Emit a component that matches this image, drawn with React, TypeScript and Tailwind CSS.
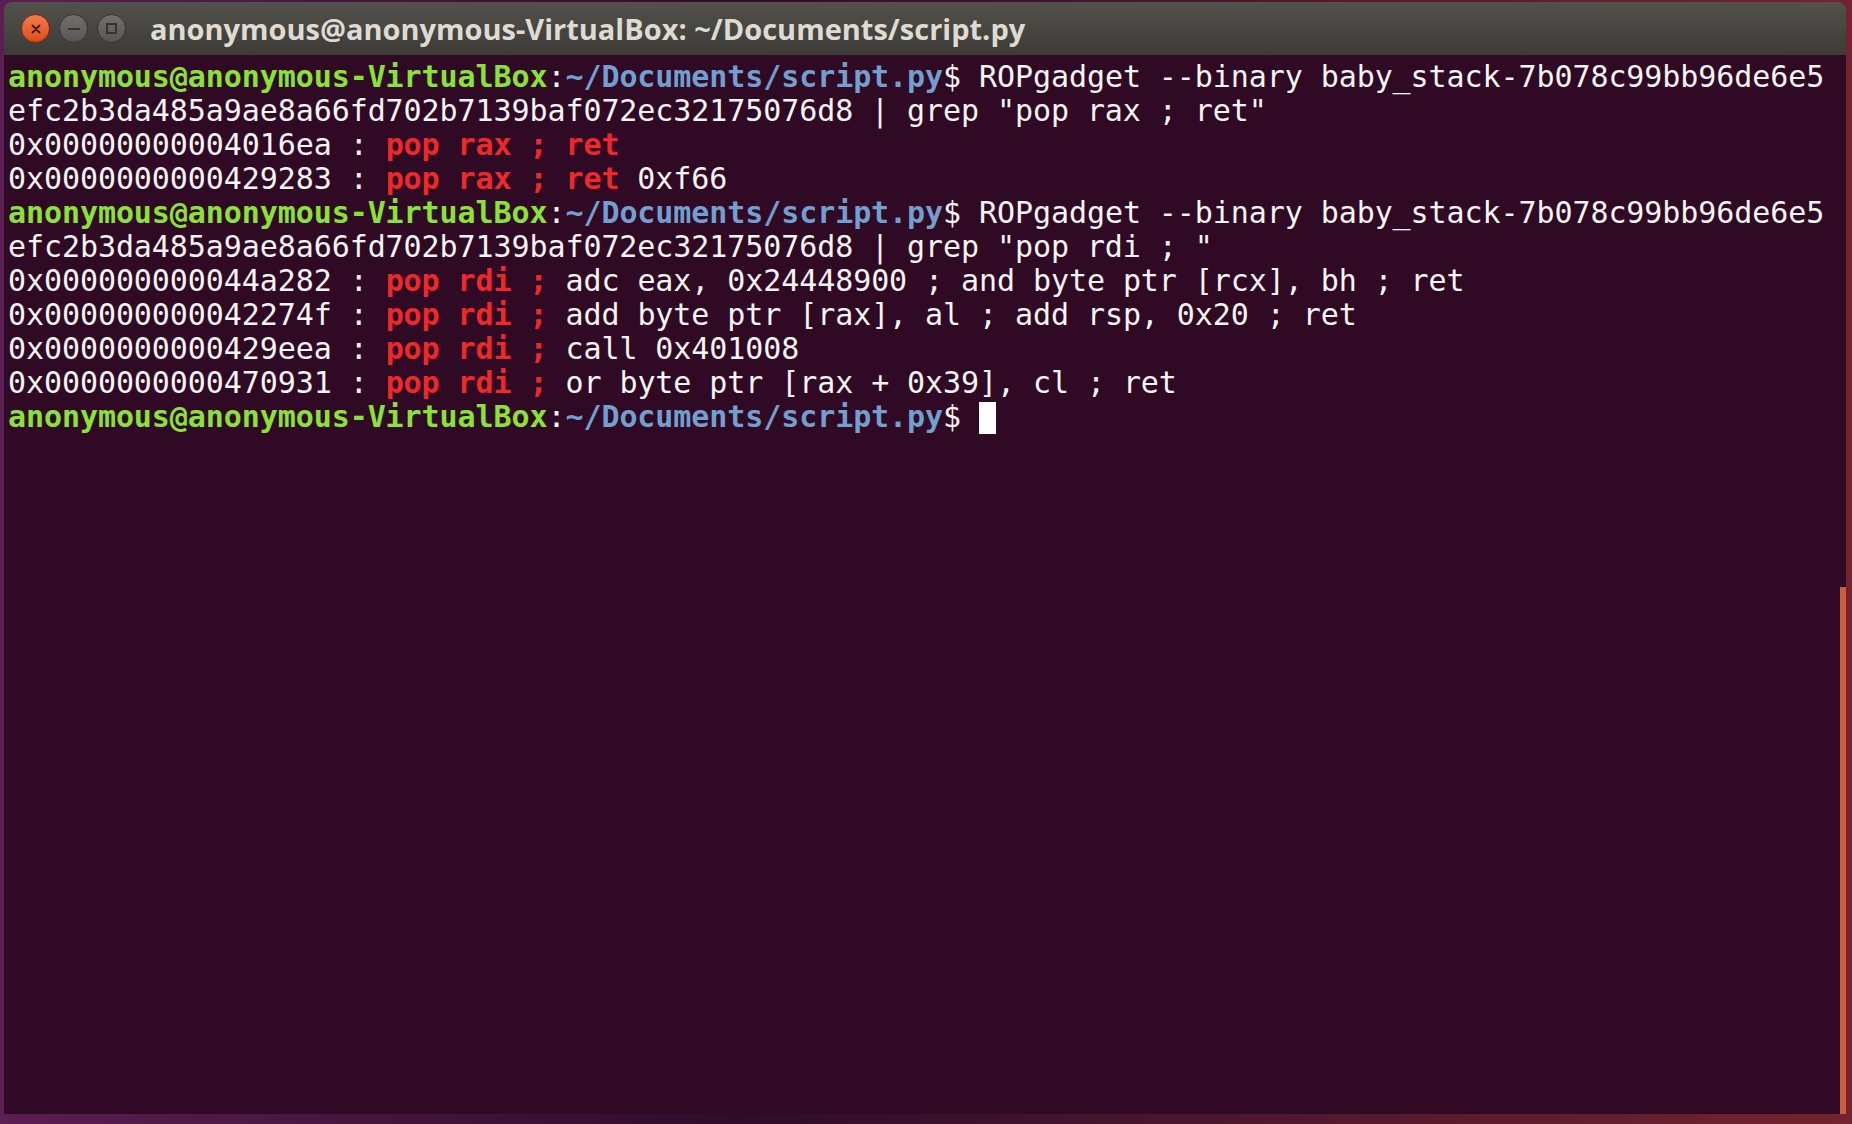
const mono = "font-['DejaVu_Sans_Mono','Liberation_Mono',monospace] text-[30px] tracking-[-0.08px] leading-[34px]"

function Prompt() {
    return (
        <>
            <span className="font-bold text-[#8ae234]">anonymous@anonymous-VirtualBox</span>
            <span>:</span>
            <span className="font-bold text-[#729fcf]">~/Documents/script.py</span>
            <span>$ </span>
        </>
    )
}

function Hit({ children }: { children: string }) {
    return <span className="font-bold text-[#ef2929]">{children}</span>
}

function Line({ children }: { children?: React.ReactNode }) {
    return <div className="h-[34px] whitespace-pre">{children}</div>
}

function CloseButton() {
    return (
        <div className="w-[29px] h-[29px] rounded-full border border-[#7a2a10] bg-gradient-to-b from-[#f47a4c] to-[#dd4c18] flex items-center justify-center">
            <svg width="10" height="10" viewBox="0 0 10 10">
                <path d="M1.5 1.5 L8.5 8.5 M8.5 1.5 L1.5 8.5" stroke="#3b1a0d" strokeWidth="1.8" strokeLinecap="round" />
            </svg>
        </div>
    )
}

function GrayButton({ kind }: { kind: 'min' | 'max' }) {
    return (
        <div className="w-[29px] h-[29px] rounded-full border border-[#353430] bg-gradient-to-b from-[#72716c] to-[#575652] flex items-center justify-center">
            {kind === 'min' ? (
                <div className="w-[12px] h-[2px] bg-[#34332f]" />
            ) : (
                <div className="w-[11px] h-[11px] border-2 border-[#34332f]" />
            )}
        </div>
    )
}

export default function App() {
    return (
        <div className="w-[1852px] h-[1124px] flex flex-col pt-[2px] pl-[4px] pr-[6px] pb-[10px] bg-gradient-to-r from-[#5b1e52] via-[#2f0c2a] via-40% to-[#74232e]">
            <div className="flex flex-col flex-1 rounded-t-[8px] overflow-hidden">
                {/* title bar */}
                <div className="h-[53px] shrink-0 flex items-center pl-[17px] bg-gradient-to-b from-[#52514c] to-[#3c3b37]">
                    <div className="flex items-center gap-[9px]">
                        <CloseButton />
                        <GrayButton kind="min" />
                        <GrayButton kind="max" />
                    </div>
                    <span className="ml-[24px] text-[29px] font-bold text-[#dfdbd2] font-['Open_Sans','DejaVu_Sans',sans-serif]">
                        anonymous@anonymous-VirtualBox: ~/Documents/script.py
                    </span>
                </div>

                {/* terminal */}
                <div className="flex flex-1 bg-[#300a24]">
                    <div className={`flex-1 pl-[4px] pt-[5px] text-[#f4f4f2] ${mono}`}>
                        <Line><Prompt />ROPgadget --binary baby_stack-7b078c99bb96de6e5</Line>
                        <Line>efc2b3da485a9ae8a66fd702b7139baf072ec32175076d8 | grep "pop rax ; ret"</Line>
                        <Line>0x00000000004016ea : <Hit>pop rax ; ret</Hit></Line>
                        <Line>0x0000000000429283 : <Hit>pop rax ; ret</Hit> 0xf66</Line>
                        <Line><Prompt />ROPgadget --binary baby_stack-7b078c99bb96de6e5</Line>
                        <Line>efc2b3da485a9ae8a66fd702b7139baf072ec32175076d8 | grep "pop rdi ; "</Line>
                        <Line>0x000000000044a282 : <Hit>pop rdi ; </Hit>adc eax, 0x24448900 ; and byte ptr [rcx], bh ; ret</Line>
                        <Line>0x000000000042274f : <Hit>pop rdi ; </Hit>add byte ptr [rax], al ; add rsp, 0x20 ; ret</Line>
                        <Line>0x0000000000429eea : <Hit>pop rdi ; </Hit>call 0x401008</Line>
                        <Line>0x0000000000470931 : <Hit>pop rdi ; </Hit>or byte ptr [rax + 0x39], cl ; ret</Line>
                        <Line>
                            <Prompt />
                            <span className="inline-block w-[17px] h-[32px] align-[-7px] bg-white" />
                        </Line>
                    </div>
                    {/* scrollbar */}
                    <div className="w-[6px] flex flex-col">
                        <div className="h-[532px]" />
                        <div className="flex-1 bg-[#c95e3a]" />
                    </div>
                </div>
            </div>
        </div>
    )
}
